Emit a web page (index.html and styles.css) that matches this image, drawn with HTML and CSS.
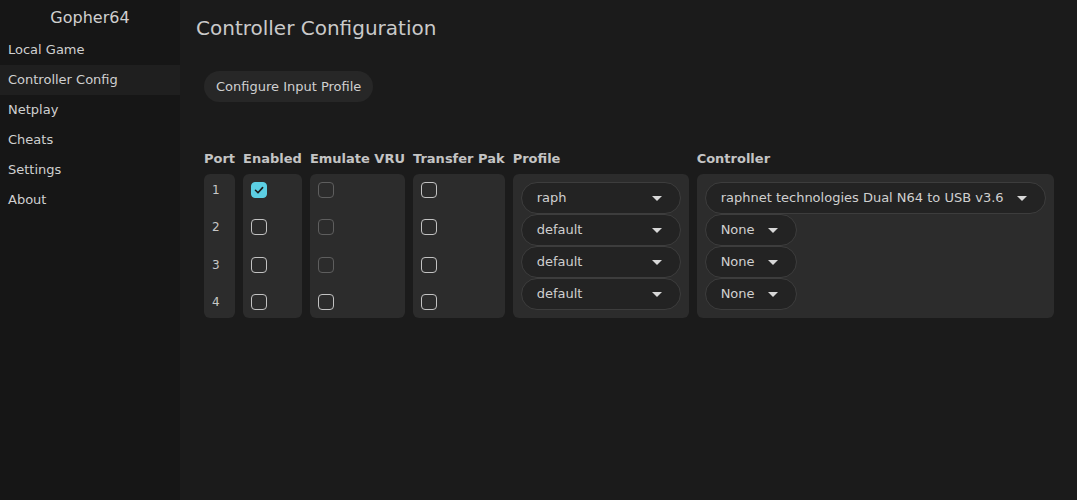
FILE: index.html
```html
<!DOCTYPE html>
<html>
<head>
<meta charset="utf-8">
<link rel="stylesheet" href="styles.css">
</head>
<body>
<div class="app">
  <aside class="sidebar">
    <div class="brand">Gopher64</div>
    <nav class="nav">
      <div class="nav-item">Local Game</div>
      <div class="nav-item active">Controller Config</div>
      <div class="nav-item">Netplay</div>
      <div class="nav-item">Cheats</div>
      <div class="nav-item">Settings</div>
      <div class="nav-item">About</div>
    </nav>
  </aside>
  <main class="main">
    <h1 class="title">Controller Configuration</h1>
    <div class="actions"><button class="btn">Configure Input Profile</button></div>
    <div class="grid">
      <div class="head">Port</div>
      <div class="head">Enabled</div>
      <div class="head">Emulate VRU</div>
      <div class="head">Transfer Pak</div>
      <div class="head">Profile</div>
      <div class="head">Controller</div>

      <div class="panel spread">
        <span class="num">1</span><span class="num">2</span><span class="num">3</span><span class="num">4</span>
      </div>
      <div class="panel spread">
        <span class="cb checked"><svg viewBox="0 0 16 16" width="16" height="16"><path d="M4.5 8.3 L7 10.8 L11.6 5.6" fill="none" stroke="#1a1a1a" stroke-width="1.6" stroke-linecap="round" stroke-linejoin="round"/></svg></span>
        <span class="cb"></span><span class="cb"></span><span class="cb"></span>
      </div>
      <div class="panel spread">
        <span class="cb disabled"></span><span class="cb disabled"></span><span class="cb disabled"></span><span class="cb"></span>
      </div>
      <div class="panel spread">
        <span class="cb"></span><span class="cb"></span><span class="cb"></span><span class="cb"></span>
      </div>
      <div class="panel stack">
        <div class="dd fixed"><span>raph</span><i class="arrow"></i></div>
        <div class="dd fixed"><span>default</span><i class="arrow"></i></div>
        <div class="dd fixed"><span>default</span><i class="arrow"></i></div>
        <div class="dd fixed"><span>default</span><i class="arrow"></i></div>
      </div>
      <div class="panel stack">
        <div class="dd"><span>raphnet technologies Dual N64 to USB v3.6</span><i class="arrow"></i></div>
        <div class="dd"><span>None</span><i class="arrow"></i></div>
        <div class="dd"><span>None</span><i class="arrow"></i></div>
        <div class="dd"><span>None</span><i class="arrow"></i></div>
      </div>
    </div>
  </main>
</div>
</body>
</html>
```

FILE: styles.css
```css
* { box-sizing: border-box; }
html, body { margin: 0; padding: 0; }
body {
  width: 1077px;
  height: 500px;
  overflow: hidden;
  background: #1b1b1b;
  color: #cfcfcf;
  font-family: "DejaVu Sans", sans-serif;
  font-size: 13px;
}
.app { display: flex; height: 500px; }
.sidebar {
  width: 180px;
  flex: none;
  background: #161616;
}
.brand {
  height: 35px;
  line-height: 35px;
  text-align: center;
  font-size: 16px;
  color: #cfcfcf;
}
.nav-item {
  height: 30px;
  line-height: 30px;
  padding-left: 8px;
  color: #d0d0d0;
}
.nav-item.active { background: #1f1f1f; }
.main {
  flex: 1;
  background: #1b1b1b;
  padding: 0 16px;
}
.title {
  margin: 0;
  padding-top: 16px;
  height: 56px;
  font-size: 20px;
  line-height: 24px;
  font-weight: normal;
  color: #cacaca;
}
.actions { padding: 15px 8px 0; }
.btn {
  font-family: inherit;
  font-size: 13px;
  color: #d0d0d0;
  background: #272727;
  border: none;
  border-radius: 16px;
  height: 31px;
  padding: 0 12px;
}
.grid {
  display: grid;
  grid-template-columns: repeat(6, auto);
  justify-content: start;
  align-items: start;
  column-gap: 8px;
  row-gap: 7px;
  margin: 49px 0 0 8px;
}
.head {
  font-weight: bold;
  line-height: 16px;
  color: #c4c4c4;
}
.panel {
  background: #2c2c2c;
  border-radius: 6px;
  padding: 8px;
  height: 144px;
}
.spread {
  display: flex;
  flex-direction: column;
  justify-content: space-between;
  align-items: flex-start;
}
.num { height: 16px; line-height: 16px; font-size: 12px; color: #c8c8c8; }
.cb {
  width: 16px;
  height: 16px;
  border: 1.5px solid #c2c2c2;
  border-radius: 4px;
  display: block;
}
.cb.disabled { border-color: #5e5e5e; }
.cb.checked {
  background: #5ccfe3;
  border-color: #5ccfe3;
  position: relative;
}
.cb.checked svg { position: absolute; left: -1.5px; top: -1.5px; }
.stack {
  display: flex;
  flex-direction: column;
  align-items: flex-start;
}
.dd {
  display: flex;
  align-items: center;
  height: 32px;
  padding: 0 18px 0 15px;
  border: 1px solid #3d3d3d;
  border-radius: 16px;
  background: #232323;
  color: #d0d0d0;
  gap: 13px;
  white-space: nowrap;
}
.dd span { position: relative; top: -1px; }
.dd.fixed { width: 160px; justify-content: space-between; }
.arrow {
  width: 0; height: 0;
  border-left: 5px solid transparent;
  border-right: 5px solid transparent;
  border-top: 5px solid #d8d8d8;
}
```
